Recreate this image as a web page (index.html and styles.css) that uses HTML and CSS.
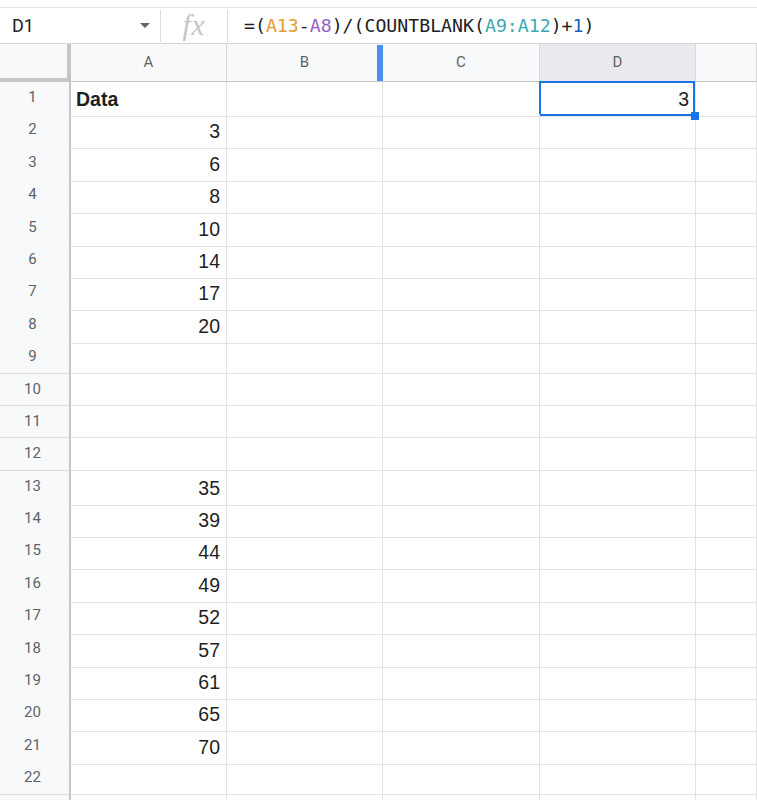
FILE: index.html
```html
<!DOCTYPE html>
<html>
<head>
    <meta charset="utf-8" />
    <meta name="viewport" content="width=device-width,initial-scale=1" />
    <title>Planilha</title>
    <link rel="stylesheet" href="styles.css">
</head>
<body>
    <div id="formula-bar">
        <div class="name-box">
            <span>D1</span>
            <span class="caret"></span>
        </div>
        <div class="fx">fx</div>
        <div class="formula">=(<span class="r1">A13</span>-<span class="r2">A8</span>)/(COUNTBLANK(<span class="r3">A9:A12</span>)+<span class="num">1</span>)</div>
    </div>

    <div id="sheet">
        <div class="row head">
            <div class="corner"></div>
            <div class="col">A</div>
            <div class="col resize">B</div>
            <div class="col">C</div>
            <div class="col active">D</div>
            <div class="col"></div>
        </div>
    </div>

    <script>
        // valores da coluna A (vazio = célula em branco)
        var data = ['', '3', '6', '8', '10', '14', '17', '20', '', '', '', '',
                    '35', '39', '44', '49', '52', '57', '61', '65', '70', '', ''];
        const SHEET = document.querySelector('#sheet');

        for (let i = 0; i < data.length; i++){
            // a última linha só aparece cortada na borda da janela
            let label = i < 22 ? (i + 1) : '';
            let row = '<div class="row"><div class="rh">' + label + '</div>';

            if (i == 0)
                row += '<div class="cell bold">Data</div>';
            else
                row += '<div class="cell num">' + data[i] + '</div>';

            row += '<div class="cell"></div><div class="cell"></div>';

            if (i == 0)
                row += '<div class="cell num sel">3<span class="handle"></span></div>';
            else
                row += '<div class="cell"></div>';

            row += '<div class="cell"></div></div>';
            SHEET.innerHTML += row;
        }
    </script>
</body>
</html>
```

FILE: styles.css
```css
* {margin: 0; padding: 0; box-sizing: border-box;}
body {
    background: #fff;
    font-family: "Liberation Sans", Arial, sans-serif;
    overflow: hidden;
    height: 800px;
}

#formula-bar {
    display: flex;
    align-items: center;
    height: 37px;
    margin-top: 7px;
    border-top: 1px solid #e3e3e3;
    border-bottom: 1px solid #d6d6d6;
}

.name-box {
    display: flex;
    align-items: center;
    justify-content: space-between;
    width: 161px;
    height: 32px;
    padding: 0 10px 0 12px;
    border-right: 1px solid #dadce0;
    font-family: Roboto, sans-serif;
    font-size: 18px;
    color: #202124;
}
.caret {
    width: 0;
    height: 0;
    border-left: 5px solid transparent;
    border-right: 5px solid transparent;
    border-top: 5px solid #5f6368;
}

.fx {
    width: 67px;
    height: 32px;
    border-right: 1px solid #dadce0;
    text-align: center;
    font-family: "Liberation Serif", serif;
    font-style: italic;
    font-size: 29px;
    line-height: 30px;
    color: #c4c4c4;
    letter-spacing: 1px;
}

.formula {
    padding-left: 16px;
    font-family: "DejaVu Sans Mono", monospace;
    font-size: 18.2px;
    color: #202124;
}
.formula .r1 {color: #e69b2e;}
.formula .r2 {color: #9263c4;}
.formula .r3 {color: #3aa8b0;}
.formula .num {color: #1a5fb4;}

#sheet {
    display: flex;
    flex-flow: column;
}

.row {
    display: grid;
    grid-template-columns: 71px 156px 156px 157px 156px 1fr;
    height: 32.4px;
    flex: none;
}
.row.head {height: 38px;}

.corner {
    background: #f8f9fa;
    border-right: 4px solid #c4c5c6;
    border-bottom: 4px solid #c4c5c6;
}

.col {
    position: relative;
    background: #f8f9fa;
    border-right: 1px solid #d9d9d9;
    border-bottom: 1px solid #c4c5c6;
    font-family: Roboto, sans-serif;
    font-size: 15px;
    color: #5f6368;
    text-align: center;
    line-height: 36px;
}
.col.active {background: #e8eaed;}
.col.resize::after {
    content: "";
    position: absolute;
    right: -1px;
    top: 1px;
    bottom: 0;
    width: 6px;
    background: #4d8ef0;
}

.rh {
    background: #f8f9fa;
    border-right: 2px solid #c4c5c6;
    border-bottom: 1px solid #dcdcdc;
    font-family: Roboto, sans-serif;
    font-size: 15px;
    color: #5f6368;
    text-align: center;
    padding-right: 4px;
    line-height: 31px;
}

.cell {
    position: relative;
    border-right: 1px solid #e2e3e3;
    border-bottom: 1px solid #e2e3e3;
    font-size: 19.5px;
    color: #1f1f1f;
    line-height: 34px;
    padding: 0 6px 0 5px;
    white-space: nowrap;
}
.cell.num {text-align: right;}
.cell.bold {font-weight: bold;}

.sel::after {
    content: "";
    position: absolute;
    inset: -1px 0 0 -1px;
    border: 2px solid #1a73e8;
}
.handle {
    position: absolute;
    right: -4px;
    bottom: -4px;
    width: 8px;
    height: 8px;
    background: #1a73e8;
    z-index: 2;
}
```
